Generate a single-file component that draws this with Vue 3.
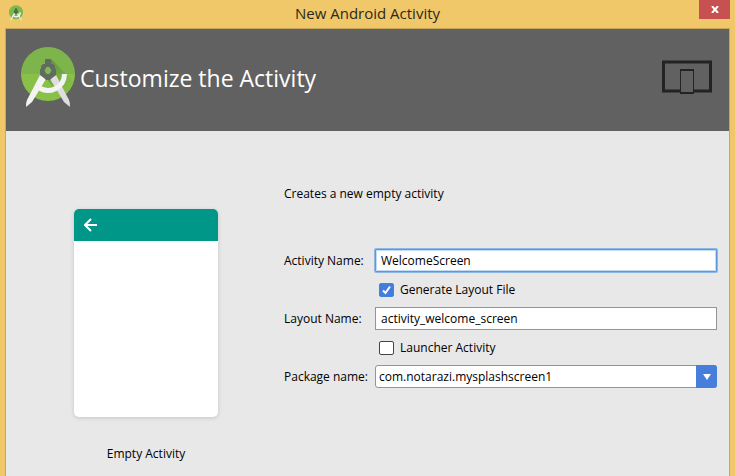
<script setup>
import { ref, onMounted } from 'vue';

const activityName = ref('WelcomeScreen');
const generateLayout = ref(true);
const layoutName = ref('activity_welcome_screen');
const launcher = ref(false);
const packageName = ref('com.notarazi.mysplashscreen1');
const nameInput = ref(null);

onMounted(() => {
  nameInput.value.focus();
  nameInput.value.setSelectionRange(0, 0);
});
</script>

<template>
  <div class="window">
    <header class="titlebar">
      <svg class="app-icon" viewBox="0 0 54 60">
        <circle cx="27" cy="27" r="27" fill="#7cb84a" />
        <path d="M19 30 L24 33 L9 56 L5 60 L5 55 Z" fill="#f2f2f2" />
        <path d="M35 30 L30 33 L44 56 L49 60 L49 55 Z" fill="#e6e6e6" />
        <path d="M43 27 A16 16 0 0 1 16 40" fill="none" stroke="#f5f5f5" stroke-width="5" />
        <path d="M23 12 h8 v5 l4 4 v8 l-6 5 h-4 l-6 -5 v-8 l4 -4 Z" fill="#566a50" />
      </svg>
      <h1 class="title">New Android Activity</h1>
      <button class="close" type="button" aria-label="Close">
        <svg viewBox="0 0 8 7" width="8" height="7">
          <path d="M1 0 L7 7 M7 0 L1 7" stroke="#fff" stroke-width="2" />
        </svg>
      </button>
    </header>

    <main class="content">
      <div class="banner">
        <svg class="logo" viewBox="0 0 54 60">
          <defs>
            <clipPath id="disc"><circle cx="27" cy="27" r="27" /></clipPath>
            <linearGradient id="shade" x1="0" y1="0" x2="1" y2="1">
              <stop offset="0" stop-color="#4d7c2f" />
              <stop offset="1" stop-color="#7cb342" stop-opacity="0" />
            </linearGradient>
          </defs>
          <g clip-path="url(#disc)">
            <rect width="54" height="27" fill="#7db54c" />
            <rect y="27" width="54" height="27" fill="#89c148" />
            <path d="M30 12 L54 36 V54 H44 L27 34 Z" fill="url(#shade)" opacity="0.7" />
          </g>
          <path d="M29 32 L35 28 L48 53 Q49 55 49 60 L43 55 Z" fill="#dedede" />
          <path d="M25 32 L19 28 L6 53 Q5 55 5 60 L11 55 Z" fill="#f3f3f3" />
          <path d="M43.5 27 A16.5 16.5 0 0 1 17 40" fill="none" stroke="#f3f3f3" stroke-width="5" />
          <path
            d="M24 12 h6 v5 h2 l2 2 v3 h1 v6 l-4 3 l-2 2 h-4 l-2 -2 l-4 -3 v-6 h1 v-3 l2 -2 h2 Z"
            fill="#616b60"
          />
          <path d="M25.500 20 h3 l2 3.500 l-2 3.500 h-3 l-2 -3.500 Z" fill="#7fb850" />
        </svg>
        <h2 class="heading">Customize the Activity</h2>
        <svg class="devices" viewBox="0 0 50 36">
          <rect x="1.500" y="2" width="47" height="29" fill="none" stroke="#212423" stroke-width="3" />
          <rect x="18.500" y="9.500" width="13" height="24" rx="1" fill="#616161" stroke="#212423" />
          <path d="M18 10 h14 M18 33 h14" stroke="#212423" stroke-width="2" />
        </svg>
      </div>

      <div class="body">
        <figure class="preview">
          <div class="phone">
            <div class="phone-bar">
              <svg viewBox="0 0 14 14" width="14" height="14">
                <path d="M13 7 H2 M7 1 L1 7 L7 13" fill="none" stroke="#fff" stroke-width="2" />
              </svg>
            </div>
          </div>
          <figcaption>Empty Activity</figcaption>
        </figure>

        <form class="form" @submit.prevent>
          <p class="intro">Creates a new empty activity</p>
          <div class="fields">
            <label for="activity-name">Activity Name:</label>
            <input id="activity-name" ref="nameInput" v-model="activityName" class="text" type="text" spellcheck="false" />

            <label class="check">
              <input v-model="generateLayout" type="checkbox" />
              <span>Generate Layout File</span>
            </label>

            <label for="layout-name">Layout Name:</label>
            <input id="layout-name" v-model="layoutName" class="text" type="text" spellcheck="false" />

            <label class="check">
              <input v-model="launcher" type="checkbox" />
              <span>Launcher Activity</span>
            </label>

            <label for="package-name">Package name:</label>
            <div class="combo">
              <select id="package-name" v-model="packageName">
                <option>com.notarazi.mysplashscreen1</option>
              </select>
              <span class="combo-arrow">
                <svg viewBox="0 0 8 6" width="8" height="6"><path d="M0 0 H8 L4 6 Z" fill="#fff" /></svg>
              </span>
            </div>
          </div>
        </form>
      </div>
    </main>
  </div>
</template>

<style>
body {
  margin: 0;
}
</style>

<style scoped>
.window {
  box-sizing: border-box;
  display: flex;
  flex-direction: column;
  min-height: 100vh;
  padding: 0 5px;
  background: #f0c869;
  color: #000;
  font-family: "Open Sans", "Noto Sans", sans-serif;
  font-size: 12px;
  line-height: 16px;
}

.titlebar {
  display: grid;
  grid-template-columns: 31px 1fr 31px;
  height: 28px;
}

.app-icon {
  width: 14px;
  height: 16px;
  margin: 5px 0 0 4px;
}

.title {
  margin: 0;
  font-size: 15px;
  font-weight: 400;
  line-height: 26px;
  text-align: center;
  color: #2b2820;
}

.close {
  display: flex;
  align-items: center;
  justify-content: center;
  height: 19px;
  padding: 0;
  border: 0;
  background: #c75050;
}

.content {
  flex: 1;
  border: 1px solid #c8a75a;
  border-bottom: 0;
  background: #e8e8e8;
}

.banner {
  display: flex;
  align-items: center;
  gap: 5px;
  height: 102px;
  padding: 0 17px 0 15px;
  background: #616161;
}

.logo {
  width: 54px;
  height: 60px;
  margin-bottom: 6px;
}

.heading {
  flex: 1;
  margin: 0 0 4px;
  font-size: 23px;
  font-weight: 400;
  line-height: 32px;
  color: #fff;
}

.devices {
  width: 50px;
  height: 36px;
  margin-bottom: 4px;
}

.body {
  display: flex;
  gap: 66px;
  padding: 55px 12px 0 68px;
}

.preview {
  flex: none;
  width: 144px;
  margin: 23px 0 0;
  text-align: center;
}

.phone {
  height: 208px;
  margin-bottom: 29px;
  border-radius: 5px;
  background: #fff;
  box-shadow: 0 1px 4px rgba(0, 0, 0, 0.15);
  overflow: hidden;
}

.phone-bar {
  display: flex;
  align-items: center;
  height: 32px;
  padding-left: 10px;
  background: #009688;
}

.form {
  flex: 1;
  min-width: 0;
}

.intro {
  margin: 0 0 47px;
}

.fields {
  display: grid;
  grid-template-columns: 91px 1fr;
  row-gap: 10px;
  align-items: center;
}

.text {
  box-sizing: border-box;
  width: 100%;
  height: 23px;
  padding: 0 5px;
  border: 1px solid #949494;
  border-radius: 0;
  background: #fff;
  color: #000;
  font: inherit;
  outline: none;
}

.text:focus {
  border-color: #5c98dc;
  border-radius: 1px;
  box-shadow: 0 0 0 1px #8cb8e8, inset 0 0 0 1px #c3dbf4;
  caret-color: transparent;
}

.check {
  grid-column: 2;
  display: flex;
  align-items: center;
  gap: 6px;
  height: 15px;
  padding-left: 4px;
}

.check input {
  appearance: none;
  box-sizing: border-box;
  width: 15px;
  height: 14px;
  margin: 0;
  border: 1px solid #444;
  border-radius: 2px;
  background: #fff;
}

.check input:checked {
  border-color: #3f85e0;
  background: #437ddb url("data:image/svg+xml,%3Csvg xmlns='http://www.w3.org/2000/svg' viewBox='0 0 13 12'%3E%3Cpath d='M3 6.500 L5.500 9 L10 2.500' fill='none' stroke='%23fff' stroke-width='2'/%3E%3C/svg%3E") center / 13px 12px no-repeat;
}

.combo {
  display: grid;
  grid-template-columns: 1fr 21px;
  height: 23px;
}

.combo select {
  grid-area: 1 / 1 / 2 / 3;
  appearance: none;
  box-sizing: border-box;
  width: 100%;
  height: 23px;
  padding: 0 24px 0 3px;
  border: 1px solid #949494;
  border-radius: 3px;
  background: #fff;
  color: #000;
  font: inherit;
}

.combo-arrow {
  grid-area: 1 / 2;
  display: flex;
  align-items: center;
  justify-content: center;
  border-radius: 0 3px 3px 0;
  background: #477ddb;
  pointer-events: none;
}
</style>
